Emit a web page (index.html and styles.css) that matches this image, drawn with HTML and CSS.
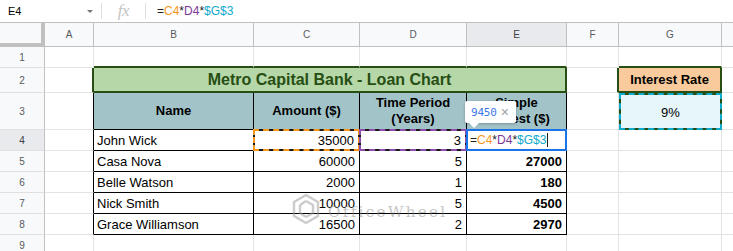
FILE: index.html
```html
<!DOCTYPE html>
<html>
<head>
<meta charset="utf-8">
<link rel="stylesheet" href="styles.css">
</head>
<body>
<div class="fbar">
  <div class="namebox"><span class="ref">E4</span><span class="caret"></span></div>
  <div class="sep"></div>
  <div class="fx">fx</div>
  <div class="sep"></div>
  <div class="formula">=<span class="o">C4</span>*<span class="p">D4</span>*<span class="b">$G$3</span></div>
</div>
<div class="sheet">
  <div class="c corner"></div>
  <div class="c ch">A</div>
  <div class="c ch">B</div>
  <div class="c ch">C</div>
  <div class="c ch">D</div>
  <div class="c ch sel">E</div>
  <div class="c ch">F</div>
  <div class="c ch">G</div>
  <div class="c ch last"></div>

  <div class="c rh">1</div>
  <div class="c"></div>
  <div class="c gb"></div>
  <div class="c gb"></div>
  <div class="c gb"></div>
  <div class="c gb"></div>
  <div class="c"></div>
  <div class="c gb"></div>
  <div class="c last"></div>

  <div class="c rh">2</div>
  <div class="c gr"></div>
  <div class="c title">Metro Capital Bank - Loan Chart</div>
  <div class="c gr"></div>
  <div class="c rate-h">Interest Rate</div>
  <div class="c last"></div>

  <div class="c rh">3</div>
  <div class="c kr"></div>
  <div class="c th">Name</div>
  <div class="c th">Amount ($)</div>
  <div class="c th">Time Period<br>(Years)</div>
  <div class="c th">Simple<br>Interest ($)</div>
  <div class="c"></div>
  <div class="c rate">9%</div>
  <div class="c last"></div>

  <div class="c rh sel">4</div>
  <div class="c kr"></div>
  <div class="c td">John Wick</div>
  <div class="c td num hl hl-o">35000</div>
  <div class="c td num hl hl-p">3</div>
  <div class="c td edit">=<span class="o">C4</span>*<span class="p">D4</span>*<span class="b">$G$3</span><span class="cursor"></span></div>
  <div class="c"></div>
  <div class="c"></div>
  <div class="c last"></div>

  <div class="c rh">5</div>
  <div class="c kr"></div>
  <div class="c td">Casa Nova</div>
  <div class="c td num">60000</div>
  <div class="c td num">5</div>
  <div class="c td num bold">27000</div>
  <div class="c"></div>
  <div class="c"></div>
  <div class="c last"></div>

  <div class="c rh">6</div>
  <div class="c kr"></div>
  <div class="c td">Belle Watson</div>
  <div class="c td num">2000</div>
  <div class="c td num">1</div>
  <div class="c td num bold">180</div>
  <div class="c"></div>
  <div class="c"></div>
  <div class="c last"></div>

  <div class="c rh">7</div>
  <div class="c kr"></div>
  <div class="c td">Nick Smith</div>
  <div class="c td num">10000</div>
  <div class="c td num">5</div>
  <div class="c td num bold">4500</div>
  <div class="c"></div>
  <div class="c"></div>
  <div class="c last"></div>

  <div class="c rh">8</div>
  <div class="c kr"></div>
  <div class="c td">Grace Williamson</div>
  <div class="c td num">16500</div>
  <div class="c td num">2</div>
  <div class="c td num bold">2970</div>
  <div class="c"></div>
  <div class="c"></div>
  <div class="c last"></div>

  <div class="c rh">9</div>
  <div class="c"></div>
  <div class="c"></div>
  <div class="c"></div>
  <div class="c"></div>
  <div class="c"></div>
  <div class="c"></div>
  <div class="c"></div>
  <div class="c last"></div>
</div>

<div class="tip"><span class="tipval">9450</span><span class="tipx">×</span></div>

<div class="wm">
  <svg class="wm-logo" width="30" height="32" viewBox="0 0 30 32">
    <g fill="none" stroke="#9a9a9a" stroke-width="2.4" stroke-linejoin="round">
      <path d="M15 2 L27 9 L27 23 L15 30 L3 23 L3 9 Z"/>
      <path d="M15 8 L22 12 L22 20 L15 24"/>
      <path d="M9 12 L9 20 L15 24"/>
      <path d="M9 12 L15 8"/>
    </g>
  </svg>
  <span class="wm-text">OfficeWheel</span>
</div>
</body>
</html>
```
FILE: styles.css
```css
html, body {
  margin: 0;
  padding: 0;
}
body {
  width: 733px;
  height: 251px;
  overflow: hidden;
  position: relative;
  background: #fff;
  font-family: "Liberation Sans", Arial, sans-serif;
  color: #000;
}

/* formula bar */
.fbar {
  display: flex;
  align-items: center;
  height: 23px;
  box-sizing: border-box;
  border-bottom: 1px solid #c0c0c0;
}
.namebox {
  width: 101px;
  box-sizing: border-box;
  padding-left: 8px;
  display: flex;
  align-items: center;
  font-size: 11px;
  color: #000;
}
.ref { flex: 1; }
.caret {
  width: 0;
  height: 0;
  border-left: 3px solid transparent;
  border-right: 3px solid transparent;
  border-top: 3px solid #777;
  margin-right: 8px;
  margin-top: 1px;
}
.sep {
  width: 1px;
  height: 16px;
  background: #e0e0e0;
}
.fx {
  width: 43px;
  text-align: center;
  font-family: "Liberation Serif", serif;
  font-style: italic;
  font-size: 17px;
  color: #c4c4c4;
  line-height: 20px;
  letter-spacing: -0.5px;
}
.formula {
  padding-left: 11px;
  font-size: 12px;
  color: #222;
}
.o { color: #f7981d; }
.p { color: #7e3794; }
.b { color: #11a9cc; }

/* sheet grid */
.sheet {
  display: grid;
  grid-template-columns: 45px 49px 160px 106px 107px 100px 52px 103px 1fr;
  grid-template-rows: 24px 21px 25px 37px 21px 21px 21px 21px 21px 21px;
}
.c {
  box-sizing: border-box;
  border-right: 1px solid #e2e3e3;
  border-bottom: 1px solid #e2e3e3;
  display: flex;
  align-items: center;
  min-width: 0;
  overflow: hidden;
  white-space: nowrap;
  font-size: 13px;
}
.c.last { border-right: none; }

.corner {
  background: #f8f9fa;
  border-right: 4px solid #c0c0c0;
  border-bottom: 4px solid #c0c0c0;
}
.ch {
  background: #f8f9fa;
  border-right-color: #c0c0c0;
  border-bottom-color: #c0c0c0;
  justify-content: center;
  font-size: 10px;
  color: #575a5e;
  font-family: "Liberation Sans", Arial, sans-serif;
}
.rh {
  background: #f8f9fa;
  border-right-color: #c0c0c0;
  border-bottom-color: #e0e0e0;
  justify-content: center;
  font-size: 10px;
  color: #575a5e;
}
.ch.sel, .rh.sel {
  background: #e8eaed;
  color: #3c4043;
}

/* green borders around title & interest rate */
.gb { border-bottom: 2px solid #274e13; }
.gr { border-right: 2px solid #274e13; }

.title {
  grid-column: span 4;
  background: #b6d7a8;
  border-right: 2px solid #274e13;
  border-bottom: 2px solid #274e13;
  justify-content: center;
  font-weight: bold;
  font-size: 16px;
  color: #274e13;
}
.rate-h {
  background: #f9cb9c;
  border-right: 2px solid #274e13;
  border-bottom: 2px solid #274e13;
  justify-content: center;
  font-weight: bold;
  font-size: 13px;
}
.rate {
  border: 2px dashed #11a9cc;
  background: linear-gradient(#e6f6fa, #e6f6fa) padding-box, #274e13 border-box;
  justify-content: center;
  font-size: 13px;
  padding-top: 1px;
}

/* black table */
.kr { border-right-color: #000; }
.th {
  background: #a2c4c9;
  border-right-color: #000;
  border-bottom-color: #000;
  justify-content: center;
  text-align: center;
  font-weight: bold;
  line-height: 16px;
  white-space: normal;
}
.td {
  border-right-color: #000;
  border-bottom-color: #000;
  padding: 0 3px;
}
.num { justify-content: flex-end; padding-right: 4px; }
.bold { font-weight: bold; }

.hl {
  border: 2px dashed #000;
  margin: -1px 0 0 -1px;
}
.hl-o {
  border-color: #f7981d;
  background: linear-gradient(#fff, #fff) padding-box, #1a1a1a border-box;
}
.hl-p {
  border-color: #8e4fae;
  background: linear-gradient(#fff, #fff) padding-box, #1a1a1a border-box;
}
.edit {
  border: 2px solid #1a73e8;
  margin: -1px 0 0 -1px;
  padding-left: 2px;
  font-size: 12px;
  color: #222;
  background: #fff;
}
.cursor {
  display: inline-block;
  width: 1px;
  height: 14px;
  background: #222;
  margin-left: 1px;
}

/* tooltip above the editor */
.tip {
  position: absolute;
  left: 465px;
  top: 101px;
  width: 51px;
  height: 22px;
  box-sizing: border-box;
  background: #fff;
  border-radius: 2px;
  box-shadow: 0 1px 3px rgba(60, 64, 67, 0.35), 0 0 1px rgba(60, 64, 67, 0.2);
  display: flex;
  align-items: center;
  padding-left: 6px;
}
.tip::after {
  content: "";
  position: absolute;
  left: 4px;
  bottom: -5px;
  border-left: 5px solid transparent;
  border-right: 5px solid transparent;
  border-top: 5px solid #fff;
}
.tipval {
  font-family: "DejaVu Sans Mono", monospace;
  font-size: 11px;
  color: #3b78e7;
  letter-spacing: -0.2px;
}
.tipx {
  font-size: 14px;
  color: #9aa0a6;
  margin-left: 4px;
}

/* watermark */
.wm {
  position: absolute;
  left: 291px;
  top: 193px;
  display: flex;
  align-items: center;
  opacity: 0.5;
  pointer-events: none;
}
.wm-logo { display: block; }
.wm-text {
  margin-left: 7px;
  font-family: "DejaVu Serif", "Liberation Serif", serif;
  font-size: 15px;
  letter-spacing: 2.4px;
  color: #8a8a8a;
  margin-top: 6px;
}
```
